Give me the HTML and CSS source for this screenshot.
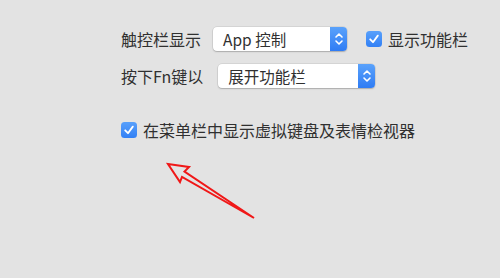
FILE: index.html
```html
<!DOCTYPE html>
<html lang="zh-CN">
<head>
<meta charset="utf-8">
<link rel="stylesheet" href="styles.css">
</head>
<body>
<div class="panel">
  <div class="row row-1">
    <span class="label">触控栏显示</span>
    <div class="popup popup-a">
      <span class="popup-text">App 控制</span>
      <span class="stepper"><svg width="16" height="24" viewBox="0 0 16 24"><path d="M5 10 L8 7 L11 10 M5 14 L8 17 L11 14" fill="none" stroke="#fff" stroke-width="1.6" stroke-linecap="round" stroke-linejoin="round"/></svg></span>
    </div>
    <label class="check check-inline">
      <span class="box"><svg width="16" height="16" viewBox="0 0 16 16"><path d="M4.2 8.3 L7 11.2 L11.8 4.6" fill="none" stroke="#fff" stroke-width="1.8" stroke-linecap="round" stroke-linejoin="round"/></svg></span>
      <span class="check-text">显示功能栏</span>
    </label>
  </div>
  <div class="row row-2">
    <span class="label">按下Fn键以</span>
    <div class="popup popup-b">
      <span class="popup-text">展开功能栏</span>
      <span class="stepper"><svg width="16" height="24" viewBox="0 0 16 24"><path d="M5 10 L8 7 L11 10 M5 14 L8 17 L11 14" fill="none" stroke="#fff" stroke-width="1.6" stroke-linecap="round" stroke-linejoin="round"/></svg></span>
    </div>
  </div>
  <label class="check row-3">
    <span class="box"><svg width="16" height="16" viewBox="0 0 16 16"><path d="M4.2 8.3 L7 11.2 L11.8 4.6" fill="none" stroke="#fff" stroke-width="1.8" stroke-linecap="round" stroke-linejoin="round"/></svg></span>
    <span class="check-text">在菜单栏中显示虚拟键盘及表情检视器</span>
  </label>
</div>
<svg class="arrow" width="500" height="278" viewBox="0 0 500 278">
  <path d="M168 164 L189 167 L184.5 171.5 L254 218 L182 177 L180 182 Z" fill="none" stroke="#f01818" stroke-width="2" stroke-linejoin="miter"/>
</svg>
</body>
</html>
```
FILE: styles.css
```css
html, body {
  margin: 0;
  padding: 0;
}
body {
  width: 500px;
  height: 278px;
  background: #e3e3e3;
  font-family: "Noto Sans CJK SC", "Noto Sans", sans-serif;
  color: #303030;
  font-size: 16px;
  position: relative;
  overflow: hidden;
}
.panel {
  display: flex;
  flex-direction: column;
  padding: 27px 0 0 121px;
}
.row {
  display: flex;
  align-items: center;
  height: 24px;
}
.row-2 {
  margin-top: 13px;
}
.label {
  line-height: 24px;
}
.popup {
  display: flex;
  align-items: stretch;
  height: 24px;
  background: #fff;
  border-radius: 4px;
  box-shadow: 0 0 0 0.5px rgba(0,0,0,0.12), 0 1px 1.5px rgba(0,0,0,0.2);
  overflow: hidden;
}
.popup-a {
  margin-left: 12px;
  width: 134px;
}
.popup-b {
  margin-left: 15px;
  width: 157px;
}
.popup-text {
  flex: 1;
  padding-left: 10px;
  line-height: 24px;
  font-size: 15.5px;
}
.stepper {
  width: 17px;
  background: linear-gradient(#5aa2fb, #2f7cf4);
  display: flex;
  align-items: center;
  justify-content: center;
}
.check {
  display: flex;
  align-items: center;
}
.check-inline {
  margin-left: 19px;
}
.box {
  width: 16px;
  height: 16px;
  border-radius: 3.5px;
  background: linear-gradient(#58a0fb, #3280f5);
  display: flex;
}
.check-text {
  margin-left: 6px;
  line-height: 24px;
}
.row-3 {
  margin-top: 30px;
  height: 24px;
}
.arrow {
  position: absolute;
  left: 0;
  top: 0;
}
```
